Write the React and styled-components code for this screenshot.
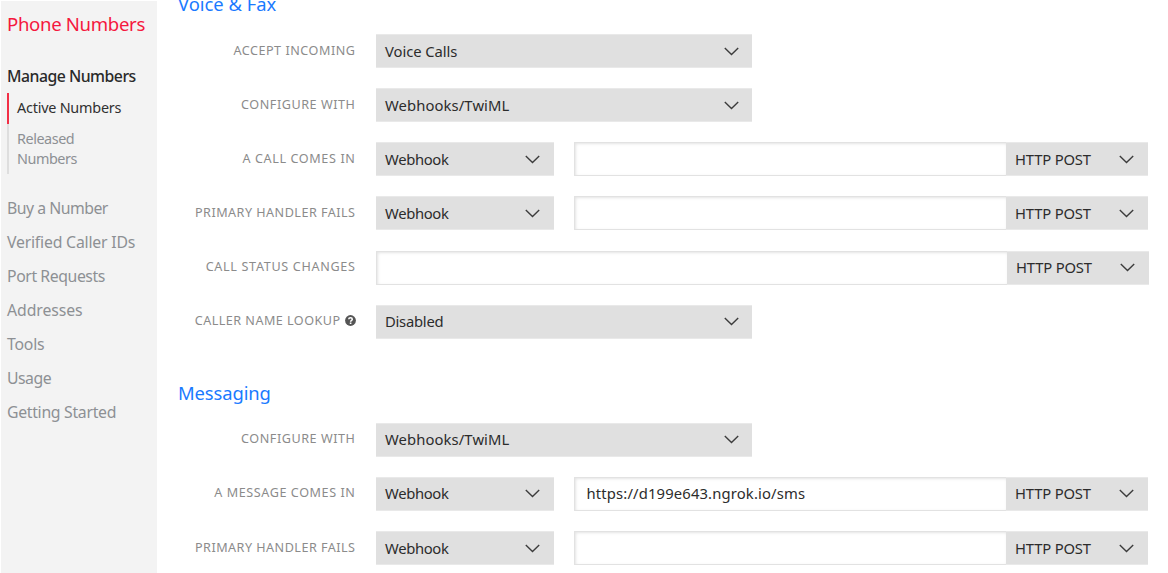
import React from "react";
import styled, { createGlobalStyle } from "styled-components";

const GlobalStyle = createGlobalStyle`
  * { box-sizing: border-box; }
  body {
    margin: 0;
    background: #fff;
    font-family: "Noto Sans", "Open Sans", sans-serif;
    overflow: hidden;
  }
`;

const Page = styled.div`
  display: flex;
  height: 573px;
  padding: 1px 0 0 1px;
  overflow: hidden;
`;

const Sidebar = styled.aside`
  display: flex;
  flex-direction: column;
  flex: none;
  width: 156px;
  height: 572px;
  padding-left: 6px;
  background: #f3f3f3;
  white-space: nowrap;
`;

const SidebarTitle = styled.h1`
  margin: 10px 0 0;
  font-size: 18.6px;
  font-weight: 400;
  line-height: 26px;
  letter-spacing: ${(p) => p.$track}px;
  color: #f5183e;
`;

const GroupTitle = styled.h2`
  margin: 28px 0 0;
  font-size: 15.8px;
  font-weight: 500;
  line-height: 22px;
  letter-spacing: ${(p) => p.$track}px;
  color: #2a2a2a;
`;

const SubNav = styled.div`
  display: flex;
  flex-direction: column;
  margin: 6px 0 22px;
`;

const SubItem = styled.a`
  height: ${(p) => (p.$active ? 31 : 50)}px;
  padding: 5px 0 0 8px;
  border-left: 2px solid ${(p) => (p.$active ? "#f22f46" : "#dedede")};
  font-size: 14.4px;
  line-height: 19.5px;
  letter-spacing: ${(p) => p.$track}px;
  color: ${(p) => (p.$active ? "#303030" : "#8d9094")};
`;

const NavItem = styled.a`
  height: 34.05px;
  font-size: 15.8px;
  line-height: 24px;
  letter-spacing: ${(p) => p.$track}px;
  color: #8d9094;
`;

const Main = styled.main`
  display: flex;
  flex-direction: column;
  flex: none;
  width: 1011px;
  padding-left: 21px;
`;

const SectionTitle = styled.h2`
  flex: none;
  height: 26px;
  margin: ${(p) => p.$gap}px 0 17px;
  font-size: 18.4px;
  font-weight: 400;
  line-height: 26px;
  letter-spacing: ${(p) => p.$track}px;
  color: #1a7aff;
`;

const Row = styled.div`
  display: flex;
  flex: none;
  height: 54.15px;
`;

const Label = styled.label`
  display: flex;
  justify-content: flex-end;
  align-items: center;
  width: 177.5px;
  height: 32px;
  margin-right: 20.5px;
  font-size: 12.6px;
  letter-spacing: ${(p) => p.$track}px;
  color: #8b8b8b;
  white-space: nowrap;
`;

const Select = styled.div`
  display: flex;
  flex: none;
  align-items: center;
  justify-content: space-between;
  width: ${(p) => p.$width}px;
  height: 34px;
  padding: 0 13.5px 0 9px;
  border: solid #e9e9e9;
  border-width: 1px 0;
  background: #e0e0e0;
  background-clip: padding-box;
  font-size: 14.8px;
  letter-spacing: ${(p) => p.$track}px;
  color: #2c2c2c;
  white-space: nowrap;
`;

const SelectText = styled.span`
  padding-bottom: 1px;
`;

const UrlField = styled.input`
  flex: none;
  width: ${(p) => p.$width}px;
  height: 34px;
  margin-left: ${(p) => p.$gap || 0}px;
  padding: 0 0 1px 12px;
  border: 1px solid #e2e2e2;
  border-right: 0;
  border-radius: 0;
  outline: none;
  background: #fff;
  box-shadow: inset 1px 1px 3px #e4e4e4;
  font: 14.8px "Noto Sans", sans-serif;
  letter-spacing: 0.15px;
  color: #2c2c2c;
`;

const Chevron = () => (
  <svg width="15" height="9" viewBox="0 0 15 9" fill="none">
    <path d="M0.8 1 L7.5 7.6 L14.2 1" stroke="#3c3c3c" strokeWidth="1.4" />
  </svg>
);

const HelpBadge = styled.svg`
  margin-left: 4px;
`;

const Help = () => (
  <HelpBadge width="11" height="11" viewBox="0 0 11 11">
    <circle cx="5.5" cy="5.5" r="5.4" fill="#555" />
    <path
      d="M3.7 4.2 C3.8 2.2 7.3 2.2 7.3 4.2 C7.3 5.4 5.6 5.3 5.6 6.8"
      fill="none"
      stroke="#fff"
      strokeWidth="1.5"
    />
    <rect x="4.8" y="7.5" width="1.6" height="1.5" fill="#fff" />
  </HelpBadge>
);

const Picker = ({ text, width, track }) => (
  <Select $width={width} $track={track}>
    <SelectText>{text}</SelectText>
    <Chevron />
  </Select>
);

const WideRow = ({ label, labelTrack, value, track, help }) => (
  <Row>
    <Label $track={labelTrack}>
      {label}
      {help && <Help />}
    </Label>
    <Picker text={value} width={376} track={track} />
  </Row>
);

const WebhookRow = ({ label, labelTrack, url = "" }) => (
  <Row>
    <Label $track={labelTrack}>{label}</Label>
    <Picker text="Webhook" width={177.5} track={-0.33} />
    <UrlField $width={432.5} $gap={20} defaultValue={url} />
    <Picker text="HTTP POST" width={141.5} track={-0.17} />
  </Row>
);

const links = [
  ["Buy a Number", -0.5],
  ["Verified Caller IDs", -0.2],
  ["Port Requests", -0.42],
  ["Addresses", -0.08],
  ["Tools", -0.2],
  ["Usage", -0.5],
  ["Getting Started", -0.3],
];

export default function App() {
  return (
    <Page>
      <GlobalStyle />
      <Sidebar>
        <SidebarTitle $track={-0.33}>Phone Numbers</SidebarTitle>
        <GroupTitle $track={-0.5}>Manage Numbers</GroupTitle>
        <SubNav>
          <SubItem $active $track={-0.22}>Active Numbers</SubItem>
          <SubItem $track={-0.45}>
            Released
            <br />
            Numbers
          </SubItem>
        </SubNav>
        {links.map(([text, track]) => (
          <NavItem key={text} $track={track}>{text}</NavItem>
        ))}
      </Sidebar>
      <Main>
        <SectionTitle $gap={-10} $track={0}>Voice &amp; Fax</SectionTitle>
        <WideRow label="ACCEPT INCOMING" labelTrack={0.53} value="Voice Calls" track={-0.06} />
        <WideRow label="CONFIGURE WITH" labelTrack={0.55} value="Webhooks/TwiML" track={0.1} />
        <WebhookRow label="A CALL COMES IN" labelTrack={0.62} />
        <WebhookRow label="PRIMARY HANDLER FAILS" labelTrack={0.48} />
        <Row>
          <Label $track={0.67}>CALL STATUS CHANGES</Label>
          <UrlField $width={631} />
          <Picker text="HTTP POST" width={141.5} track={-0.17} />
        </Row>
        <WideRow label="CALLER NAME LOOKUP" labelTrack={0.47} value="Disabled" track={-0.25} help />
        <SectionTitle $gap={21} $track={-0.1}>Messaging</SectionTitle>
        <WideRow label="CONFIGURE WITH" labelTrack={0.55} value="Webhooks/TwiML" track={0.1} />
        <WebhookRow label="A MESSAGE COMES IN" labelTrack={0.58} url="https://d199e643.ngrok.io/sms" />
        <WebhookRow label="PRIMARY HANDLER FAILS" labelTrack={0.48} />
      </Main>
    </Page>
  );
}
